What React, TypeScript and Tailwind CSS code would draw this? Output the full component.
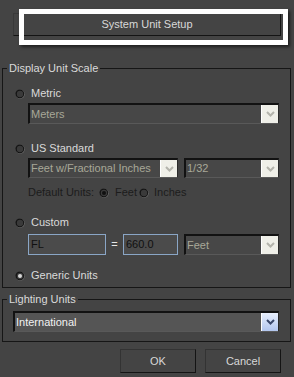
import React from 'react'
import clsx from 'clsx'

function Chevron() {
    return (
        <svg width="9" height="6" viewBox="0 0 9 6" className="stroke-current">
            <path d="M1 1 L4.5 4.5 L8 1" fill="none" strokeWidth="2" />
        </svg>
    )
}

function Radio({ checked = false, dark = false }: { checked?: boolean; dark?: boolean }) {
    return (
        <svg width="10" height="10" viewBox="0 0 10 10" className="shrink-0">
            <circle cx="5.2" cy="5.2" r="4.6" fill="#666666" />
            <circle cx="4.8" cy="4.8" r="4.4" fill="#141414" />
            <circle cx="5" cy="5" r="3.2" fill="#3a3a3a" />
            {checked && <circle cx="5" cy="5" r="2" fill={dark ? '#111111' : '#d8d8d8'} />}
        </svg>
    )
}

interface DropdownProps {
    value: string
    className?: string
    active?: boolean
}

function Dropdown({ value, className, active = false }: DropdownProps) {
    return (
        <div
            className={clsx(
                'flex border-t-2 border-l-2 border-b border-r border-t-[#121212] border-l-[#121212] border-b-[#595959] border-r-[#2a2a2a]',
                active ? 'bg-[#555555]' : 'bg-[#474747]',
                className,
            )}
        >
            <span
                className={clsx(
                    'flex-1 flex items-center pl-[1px] truncate',
                    active ? 'text-[#f2f2f2]' : 'text-[#a8a898]',
                )}
            >
                {value}
            </span>
            <div
                className={clsx(
                    'w-[17px] flex items-center justify-center border-l border-white',
                    active
                        ? 'bg-gradient-to-b from-[#e8effc] to-[#b2c6ee] text-[#39476a]'
                        : 'bg-[#efefe8] text-[#b4b4ac]',
                )}
            >
                <Chevron />
            </div>
        </div>
    )
}

function RadioRow({ label, checked = false, className }: { label: string; checked?: boolean; className?: string }) {
    return (
        <div className={clsx('flex items-center h-[13px] pl-[12px] gap-[6px]', className)}>
            <Radio checked={checked} />
            <span className="text-[#dadada]">{label}</span>
        </div>
    )
}

function GroupLabel({ children }: { children: React.ReactNode }) {
    return (
        <span className="absolute -top-[8px] left-[4px] px-[2px] bg-[#444444] text-[#dadada] leading-[14px]">
            {children}
        </span>
    )
}

function PushButton({ children, className }: { children: React.ReactNode; className?: string }) {
    return (
        <button
            type="button"
            className={clsx(
                'flex items-center justify-center bg-[#444444] text-[#d8d8d8] border border-t-[#333333] border-l-[#333333] border-b-[#141414] border-r-[#141414]',
                className,
            )}
        >
            {children}
        </button>
    )
}

export default function App() {
    return (
        <div className="relative w-[294px] h-[377px] overflow-hidden bg-[#444444] text-[11px] leading-[13px] font-['Liberation_Sans',Arial,sans-serif] pt-[13px]">
            {/* Top button + highlight frame */}
            <PushButton className="ml-[13px] w-[268px] h-[23px] border-t-[#393939] border-l-[#393939] border-b-[#0c0c0c] border-r-[#0c0c0c]">
                System Unit Setup
            </PushButton>
            <div className="absolute left-[19px] top-[9px] w-[269px] h-[36px] border-[5px] border-white shadow-[2px_2px_3px_rgba(0,0,0,0.55)]" />

            {/* Display Unit Scale */}
            <div className="relative mt-[32px] ml-[2px] w-[289px] h-[220px] border border-[#161616] pr-[11px]">
                <GroupLabel>Display Unit Scale</GroupLabel>

                <RadioRow label="Metric" className="mt-[18px]" />
                <div className="mt-[3px] pl-[25px]">
                    <Dropdown value="Meters" className="h-[21px]" />
                </div>

                <RadioRow label="US Standard" className="mt-[18px]" />
                <div className="mt-[3px] pl-[25px] flex gap-[6px]">
                    <Dropdown value="Feet w/Fractional Inches" className="h-[20px] w-[150px]" />
                    <Dropdown value="1/32" className="h-[20px] flex-1" />
                </div>

                <div className="mt-[8px] pl-[25px] flex items-center h-[13px] text-[#1c1c1c]">
                    <span>Default Units:</span>
                    <span className="ml-[5px]"><Radio checked dark /></span>
                    <span className="ml-[6px]">Feet</span>
                    <span className="ml-[2px]"><Radio /></span>
                    <span className="ml-[5px]">Inches</span>
                </div>

                <RadioRow label="Custom" className="mt-[17px]" />
                <div className="mt-[5px] pl-[25px] flex items-center h-[21px]">
                    <div className="w-[78px] h-full border border-[#8aa6c6] bg-[#4b4b4b] text-[#101010] flex items-center pl-[2px]">
                        FL
                    </div>
                    <span className="w-[17px] text-center text-[#e6e6e6]">=</span>
                    <div className="w-[55px] h-full border border-[#8aa6c6] bg-[#4b4b4b] text-[#101010] flex items-center pl-[2px]">
                        660.0
                    </div>
                    <Dropdown value="Feet" className="ml-[6px] h-full flex-1" />
                </div>

                <RadioRow label="Generic Units" checked className="mt-[14px]" />
            </div>

            {/* Lighting Units */}
            <div className="relative mt-[11px] ml-[2px] w-[289px] h-[43px] border border-[#161616] pl-[10px] pr-[11px]">
                <GroupLabel>Lighting Units</GroupLabel>
                <Dropdown value="International" active className="mt-[11px] h-[21px]" />
            </div>

            {/* Dialog buttons */}
            <div className="mt-[7px] flex justify-end gap-[9px] pr-[13px]">
                <PushButton className="w-[76px] h-[24px]">OK</PushButton>
                <PushButton className="w-[76px] h-[24px]">Cancel</PushButton>
            </div>
        </div>
    )
}
